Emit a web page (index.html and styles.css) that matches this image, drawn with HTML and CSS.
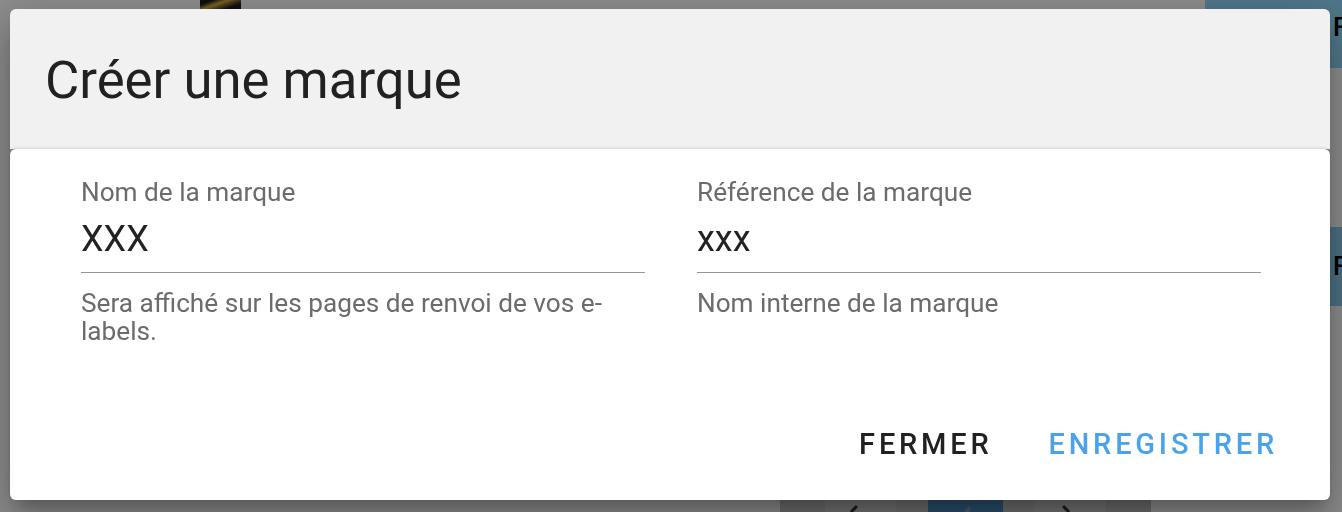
FILE: index.html
```html
<!DOCTYPE html>
<html lang="fr">
<head>
<meta charset="utf-8">
<title>Créer une marque</title>
<link rel="stylesheet" href="styles.css">
</head>
<body>
<div class="page">
  <div class="thumb"></div>
  <div class="side-btn side-btn-top"><span>F</span></div>
  <div class="side-btn side-btn-mid"><span>F</span></div>
  <div class="pager">
    <span class="pg pg-a"></span>
    <span class="pg pg-b"><svg width="71" height="12" viewBox="0 0 71 12"><path d="M26 12 L32 6" stroke="#333" stroke-width="3" fill="none"/></svg></span>
    <span class="pg pg-c"></span>
    <span class="pg pg-active"><svg width="75" height="12" viewBox="0 0 75 12"><path d="M36 12 L42 5 L42 12 Z" fill="#8aa0b4"/></svg></span>
    <span class="pg pg-c"></span>
    <span class="pg pg-b"><svg width="71" height="12" viewBox="0 0 71 12"><path d="M28 6 L34 12" stroke="#333" stroke-width="3" fill="none"/></svg></span>
    <span class="pg pg-a"></span>
  </div>
</div>
<div class="backdrop">
  <div class="dialog">
    <div class="dialog-header">
      <h2 class="dialog-title">Créer une marque</h2>
    </div>
    <div class="dialog-body">
      <div class="fields">
        <div class="field">
          <div class="field-label">Nom de la marque</div>
          <div class="field-input">XXX</div>
          <div class="field-helper">Sera affiché sur les pages de renvoi de vos e-labels.</div>
        </div>
        <div class="field">
          <div class="field-label">Référence de la marque</div>
          <div class="field-input">xxx</div>
          <div class="field-helper">Nom interne de la marque</div>
        </div>
      </div>
      <div class="actions">
        <button class="btn btn-close" type="button">Fermer</button>
        <button class="btn btn-save" type="button">Enregistrer</button>
      </div>
    </div>
  </div>
</div>
</body>
</html>
```

FILE: styles.css
```css
* { box-sizing: border-box; }

html, body {
  margin: 0;
  padding: 0;
  width: 1342px;
  height: 512px;
  overflow: hidden;
  font-family: Roboto, "Liberation Sans", Arial, sans-serif;
  background: #ffffff;
}

/* underlying page (mostly hidden by the modal) */
.page {
  position: relative;
  width: 1342px;
  height: 512px;
  background: #ffffff;
}

.thumb {
  position: absolute;
  left: 200px;
  top: -20px;
  width: 41px;
  height: 40px;
  background: linear-gradient(160deg, #1a1a1a 0%, #1a1a1a 45%, #e0b040 55%, #1f1f1f 70%);
}

.side-btn {
  position: absolute;
  left: 1205px;
  width: 200px;
  color: #000;
  font-size: 26px;
  font-weight: 500;
}
.side-btn span {
  position: absolute;
  left: 128px;
}
.side-btn-top { top: 0; height: 68px; background: #90d8fa; }
.side-btn-top span { top: 12px; }
.side-btn-mid { top: 227px; height: 79px; background: #88cdf0; }
.side-btn-mid span { top: 24px; }

.pager {
  position: absolute;
  left: 780px;
  top: 500px;
  display: flex;
  height: 12px;
}
.pg { display: block; height: 12px; }
.pg-a { width: 45px; background: #c4c4c4; }
.pg-b { width: 71px; background: #d0d0d0; }
.pg-c { width: 32px; background: #c8c8c8; }
.pg-active { width: 75px; background: #4c8cc4; }
.pg svg { display: block; }

/* modal */
.backdrop {
  position: fixed;
  inset: 0;
  background: rgba(0, 0, 0, 0.45);
  display: flex;
  align-items: flex-start;
  padding: 9px 0 0 10px;
}

.dialog {
  width: 1320px;
  border-radius: 6px;
  box-shadow: 0 11px 15px -7px rgba(0,0,0,0.22), 0 24px 38px 3px rgba(0,0,0,0.16), 0 9px 46px 8px rgba(0,0,0,0.14);
}

.dialog-header {
  height: 140px;
  background: #f1f1f1;
  border-radius: 6px 6px 0 0;
  padding: 41px 35px 0;
}

.dialog-title {
  margin: 0;
  font-size: 52.7px;
  line-height: 60px;
  font-weight: 400;
  color: #212121;
}

.dialog-body {
  background: #ffffff;
  border-radius: 6px;
  box-shadow: 0 -1px 3px rgba(0,0,0,0.12);
  height: 351px;
  padding: 28px 70px 0 71px;
  display: flex;
  flex-direction: column;
}

.fields {
  display: grid;
  grid-template-columns: 564px 564px;
  column-gap: 52px;
}

.field-label {
  font-size: 26.2px;
  line-height: 30px;
  color: #6b6b6b;
}

.field-input {
  margin-top: 10px;
  padding-bottom: 11px;
  font-size: 36px;
  line-height: 44px;
  color: #222222;
  border-bottom: 1px solid #949494;
}

.field-helper {
  margin-top: 16px;
  font-size: 26.2px;
  line-height: 28px;
  color: #6b6b6b;
}

.actions {
  margin-top: auto;
  margin-bottom: 26px;
  margin-right: -32px;
  display: flex;
  justify-content: flex-end;
  gap: 28px;
}

.btn {
  border: 0;
  background: transparent;
  padding: 12px 14px;
  font-family: Roboto, "Liberation Sans", Arial, sans-serif;
  font-size: 29px;
  line-height: 36px;
  font-weight: 500;
  letter-spacing: 3.8px;
  text-transform: uppercase;
  cursor: pointer;
}

.btn-close { color: #212121; }
.btn-save { color: #4aa3e8; }
```
